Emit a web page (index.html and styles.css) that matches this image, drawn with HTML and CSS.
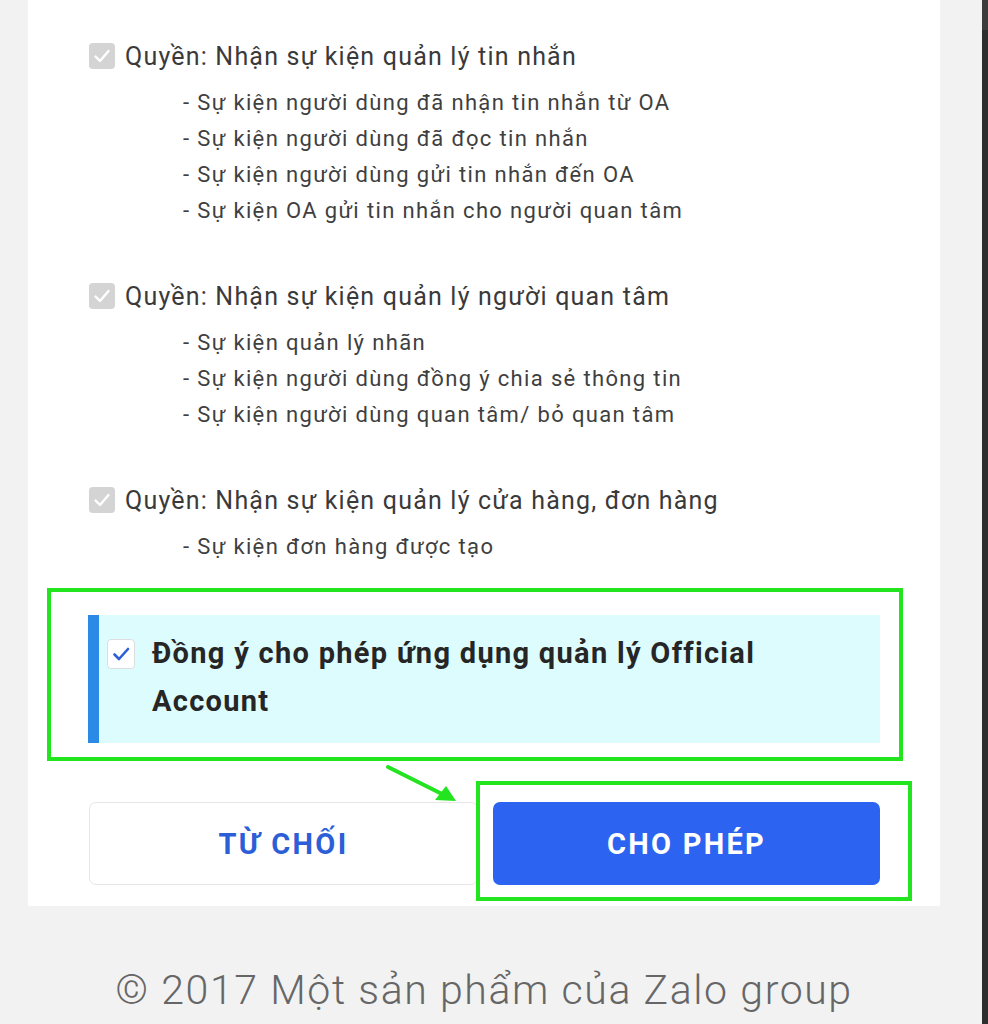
FILE: index.html
```html
<!DOCTYPE html>
<html>
<head>
    <title>Cấp quyền ứng dụng</title>
    <link rel="stylesheet" href="styles.css">
</head>
<body>
    <div class="page">
        <div class="card">
            <div class="permission">
                <div class="perm-title">
                    <span class="check-disabled">
                        <svg viewBox="0 0 26 26" width="26" height="26"><path d="M6.5 13.5l4.5 4.5 8.5-10" fill="none" stroke="#fff" stroke-width="2.4" stroke-linecap="round" stroke-linejoin="round"/></svg>
                    </span>
                    Quyền: Nhận sự kiện quản lý tin nhắn
                </div>
                <ul class="perm-list">
                    <li>- Sự kiện người dùng đã nhận tin nhắn từ OA</li>
                    <li>- Sự kiện người dùng đã đọc tin nhắn</li>
                    <li>- Sự kiện người dùng gửi tin nhắn đến OA</li>
                    <li>- Sự kiện OA gửi tin nhắn cho người quan tâm</li>
                </ul>
            </div>

            <div class="permission">
                <div class="perm-title">
                    <span class="check-disabled">
                        <svg viewBox="0 0 26 26" width="26" height="26"><path d="M6.5 13.5l4.5 4.5 8.5-10" fill="none" stroke="#fff" stroke-width="2.4" stroke-linecap="round" stroke-linejoin="round"/></svg>
                    </span>
                    Quyền: Nhận sự kiện quản lý người quan tâm
                </div>
                <ul class="perm-list">
                    <li>- Sự kiện quản lý nhãn</li>
                    <li>- Sự kiện người dùng đồng ý chia sẻ thông tin</li>
                    <li>- Sự kiện người dùng quan tâm/ bỏ quan tâm</li>
                </ul>
            </div>

            <div class="permission">
                <div class="perm-title">
                    <span class="check-disabled">
                        <svg viewBox="0 0 26 26" width="26" height="26"><path d="M6.5 13.5l4.5 4.5 8.5-10" fill="none" stroke="#fff" stroke-width="2.4" stroke-linecap="round" stroke-linejoin="round"/></svg>
                    </span>
                    Quyền: Nhận sự kiện quản lý cửa hàng, đơn hàng
                </div>
                <ul class="perm-list">
                    <li>- Sự kiện đơn hàng được tạo</li>
                </ul>
            </div>

            <div class="highlight">
                <div class="consent">
                    <span class="check-active">
                        <svg viewBox="0 0 28 30" width="28" height="30"><path d="M7.5 15.5l4.5 4.5 9-10" fill="none" stroke="#2f5fd6" stroke-width="2.6" stroke-linecap="round" stroke-linejoin="round"/></svg>
                    </span>
                    <span class="consent-text">Đồng ý cho phép ứng dụng quản lý Official Account</span>
                </div>
            </div>

            <div class="actions">
                <button class="btn btn-deny">TỪ CHỐI</button>
                <button class="btn btn-allow">CHO PHÉP</button>
            </div>

            <!-- annotation overlays -->
            <div class="mark-allow"></div>
            <svg class="mark-arrow" viewBox="0 0 90 50" width="90" height="50">
                <line x1="8" y1="7" x2="62" y2="34" stroke="#22e41f" stroke-width="4" stroke-linecap="round"/>
                <path d="M76 41 L55 40 L66 26 Z" fill="#22e41f"/>
            </svg>
        </div>

        <div class="footer">© 2017 Một sản phẩm của Zalo group</div>
    </div>
    <div class="scrollbar"></div>
</body>
</html>
```

FILE: styles.css
```css
html, body {
    margin: 0;
    height: 100%;
}

body {
    display: flex;
    background-color: #f2f2f2;
    font-family: Roboto, "Noto Sans", Arial, sans-serif;
    overflow: hidden;
}

.page {
    flex: 1;
    padding-left: 28px;
}

.card {
    position: relative;
    width: 912px;
    box-sizing: border-box;
    background-color: #fff;
    padding: 41px 0 21px 0;
}

.permission {
    margin-bottom: 52px;
}

.permission:nth-of-type(3) {
    margin-bottom: 23px;
}

.perm-title {
    display: flex;
    align-items: center;
    margin-left: 61px;
    font-size: 25px;
    line-height: 32px;
    letter-spacing: 1.2px;
    color: #3a3a3a;
}

.check-disabled {
    display: inline-flex;
    width: 26px;
    height: 26px;
    margin-right: 10px;
    margin-top: -2px;
    background-color: #d4d4d4;
    border-radius: 4px;
}

.perm-list {
    list-style: none;
    margin: 12px 0 0 0;
    padding: 0 0 0 155px;
}

.perm-list li {
    font-size: 22px;
    line-height: 36px;
    letter-spacing: 1.35px;
    color: #3f3f3f;
}

.highlight {
    margin-left: 19px;
    width: 856px;
    box-sizing: border-box;
    border: 4px solid #22e41f;
    padding: 23px 19px 14px 37px;
}

.consent {
    display: flex;
    align-items: flex-start;
    background-color: #dcfcfd;
    border-left: 11px solid #2b8ae6;
    padding: 14px 40px 18px 8px;
}

.check-active {
    display: inline-flex;
    flex-shrink: 0;
    width: 28px;
    height: 30px;
    box-sizing: border-box;
    margin-top: 10px;
    margin-right: 17px;
    background-color: #fff;
    border: 1px solid #dedede;
    border-radius: 4px;
}

.check-active svg {
    margin: -1px;
}

.consent-text {
    font-size: 29px;
    line-height: 48px;
    font-weight: bold;
    letter-spacing: 1.3px;
    color: #262626;
}

.actions {
    display: flex;
    gap: 15px;
    margin: 41px 0 0 61px;
}

.btn {
    height: 83px;
    border-radius: 7px;
    font-family: Roboto, "Noto Sans", Arial, sans-serif;
    font-size: 29px;
    font-weight: bold;
    letter-spacing: 2.3px;
    cursor: pointer;
}

.btn-deny {
    width: 389px;
    background-color: #fff;
    border: 1px solid #e6e6e6;
    color: #2c5fd7;
}

.btn-allow {
    width: 387px;
    background-color: #2c63f0;
    border: none;
    color: #fff;
}

.mark-allow {
    position: absolute;
    left: 448px;
    top: 781px;
    width: 436px;
    height: 120px;
    box-sizing: border-box;
    border: 4px solid #22e41f;
}

.mark-arrow {
    position: absolute;
    left: 352px;
    top: 760px;
}

.footer {
    width: 912px;
    text-align: center;
    margin-top: 60px;
    font-size: 41px;
    font-weight: 300;
    letter-spacing: 1.6px;
    color: #666;
}

.scrollbar {
    width: 6px;
    background: linear-gradient(#3c3c3c 0, #3c3c3c 30px, #2e2e2e 30px);
}
```
